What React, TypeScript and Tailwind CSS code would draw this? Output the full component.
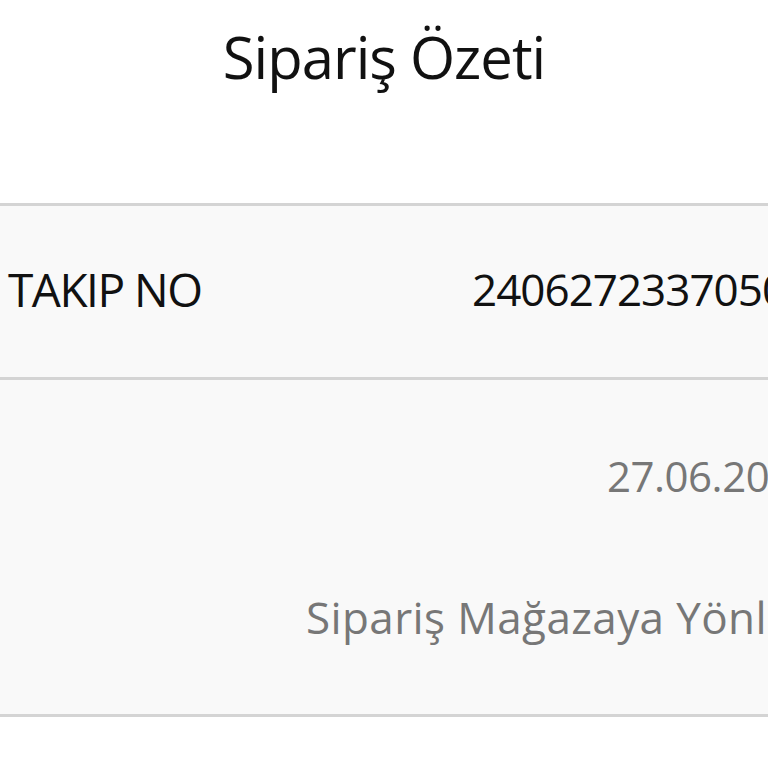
export default function App() {
  return (
    <div className="w-[768px] h-[768px] overflow-hidden bg-white" style={{ fontFamily: '"Open Sans", "Noto Sans", sans-serif' }}>
      <div className="h-[203px] flex justify-center">
        <h1 className="mt-[21px] text-[58px] leading-[72px] font-normal text-[#111] tracking-[-1px]">Sipariş Özeti</h1>
      </div>
      <div className="border-t-[3px] border-b-[3px] border-[#d4d4d4] bg-[#f9f9f9] h-[177px] flex items-center whitespace-nowrap overflow-hidden">
        <span className="pl-[8px] text-[46px] leading-[56px] text-[#111] tracking-[-1.5px] w-[472px] shrink-0 -mt-[6px]">TAKIP NO</span>
        <span className="text-[44px] leading-[56px] text-[#111] tracking-[-1px] -mt-[6px]">24062723370501</span>
      </div>
      <div className="border-b-[3px] border-[#d4d4d4] bg-[#f9f9f9] h-[337px] flex flex-col whitespace-nowrap overflow-hidden">
        <div className="pl-[607px] mt-[68px] text-[42px] leading-[56px] text-[#777] tracking-[-0.5px]">27.06.2024 23:37</div>
        <div className="pl-[306px] mt-[85px] text-[44px] leading-[56px] text-[#777] tracking-[0.4px]">Sipariş Mağazaya Yönlendirildi</div>
      </div>
    </div>
  );
}
